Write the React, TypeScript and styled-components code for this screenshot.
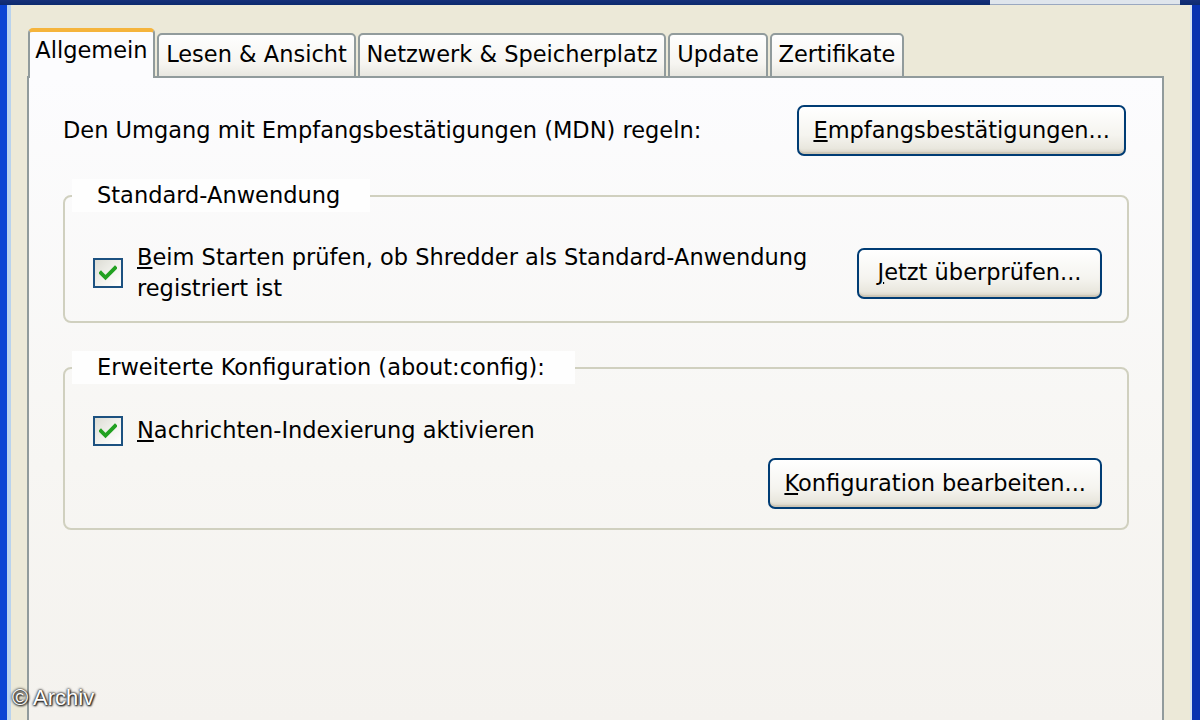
import React from "react";
import styled, { createGlobalStyle } from "styled-components";

const GlobalStyle = createGlobalStyle`
  html, body {
    margin: 0;
    padding: 0;
    width: 1200px;
    height: 720px;
    overflow: hidden;
    background: #ece9d8;
  }
  * { box-sizing: border-box; }
`;

const Window = styled.div`
  position: relative;
  width: 1200px;
  height: 720px;
  display: flex;
  flex-direction: column;
  font-family: "DejaVu Sans", "Liberation Sans", sans-serif;
  font-size: 22.5px;
  color: #000;
  overflow: hidden;
`;

const TitleEdge = styled.div`
  height: 5px;
  flex-shrink: 0;
  display: flex;
  background: linear-gradient(#16307a, #0c2a6e);
`;

const TitleSpacer = styled.div`
  flex: 1;
`;

const TitleButtonEdge = styled.div`
  width: 190px;
  margin-right: 20px;
  background: #dfe5ec;
  border-bottom: 1px solid #9aa8c0;
`;

const Frame = styled.div`
  flex: 1;
  display: flex;
`;

const FrameSide = styled.div<{ $side: "left" | "right" }>`
  flex-shrink: 0;
  width: ${(p) => (p.$side === "left" ? "11px" : "10px")};
  background: #0a44d4;
  ${(p) =>
    p.$side === "left"
      ? "border-right: 4px solid #b9d3ee;"
      : "border-left: 2px solid #d6e2ee; background: #0832b0;"}
`;

const Client = styled.div`
  flex: 1;
  display: flex;
  flex-direction: column;
  padding: 23px 26px 0 16px;
  background: #ece9d8;
`;

const TabStrip = styled.div`
  display: flex;
  align-items: flex-end;
  padding-left: 1px;
  position: relative;
  z-index: 1;
  margin-bottom: -2px;
`;

const Tab = styled.div<{ $active?: boolean; $width: number }>`
  width: ${(p) => p.$width}px;
  height: ${(p) => (p.$active ? "50px" : "45px")};
  margin-right: 2px;
  display: flex;
  align-items: center;
  justify-content: center;
  white-space: nowrap;
  border: 2px solid #919b9c;
  border-bottom: ${(p) => (p.$active ? "none" : "2px solid #919b9c")};
  border-top: ${(p) => (p.$active ? "4px solid #f5b43c" : "2px solid #919b9c")};
  border-radius: 5px 5px 0 0;
  padding-bottom: ${(p) => (p.$active ? "10px" : "4px")};
  background: ${(p) =>
    p.$active
      ? "#fcfcfe"
      : "linear-gradient(#fefefe, #f6f5f1 70%, #e8e7e0)"};
`;

const Panel = styled.div`
  flex: 1;
  border: 2px solid #919b9c;
  border-bottom: none;
  background: linear-gradient(#fcfcfe, #f7f6f3 60%, #f4f2ee);
  padding: 27px 33px 0 34px;
  display: flex;
  flex-direction: column;
`;

const Row = styled.div`
  display: flex;
  align-items: center;
  justify-content: space-between;
  padding-right: 3px;
  margin-bottom: 23px;
`;

const Label = styled.span`
  line-height: 31px;
  white-space: nowrap;
`;

const XpButton = styled.button`
  height: 51px;
  min-width: 245px;
  padding: 0 14px 2px 14px;
  font-family: inherit;
  font-size: inherit;
  color: #000;
  white-space: nowrap;
  border: 2px solid #003c74;
  border-radius: 7px;
  background: linear-gradient(#ffffff, #f5f4ef 60%, #e9e7de 88%, #d7d2c4);
  box-shadow: inset 0 -2px 1px rgba(180, 170, 150, 0.35);
  cursor: default;
`;

const GroupBox = styled.fieldset`
  margin: 0 0 28px 0;
  padding: 0 25px 0 28px;
  border: 2px solid #d0d0bf;
  border-radius: 8px;
  min-width: 0;
`;

const Legend = styled.legend`
  margin-left: -21px;
  padding: 0 30px 0 25px;
  height: 33px;
  line-height: 33px;
  background: #fefefe;
`;

const GroupRow = styled.div<{ $top: number; $bottom: number }>`
  display: flex;
  align-items: center;
  padding-top: ${(p) => p.$top}px;
  padding-bottom: ${(p) => p.$bottom}px;
`;

const RightAligned = styled.div<{ $bottom: number }>`
  display: flex;
  justify-content: flex-end;
  padding-top: 12px;
  padding-bottom: ${(p) => p.$bottom}px;
`;

const CheckLabel = styled.label`
  flex: 1;
  display: flex;
  align-items: center;
  gap: 14px;
`;

const CheckBox = styled.span`
  width: 30px;
  height: 30px;
  flex-shrink: 0;
  border: 2px solid #1c5180;
  background: linear-gradient(135deg, #dcdcd4, #f4f4f0 60%, #ffffff);
  display: flex;
  align-items: center;
  justify-content: center;
`;

const Watermark = styled.div`
  position: absolute;
  left: 12px;
  bottom: 9px;
  font-family: "Liberation Sans", Arial, sans-serif;
  font-size: 22px;
  color: #fff;
  text-shadow: 0 0 3px #222, 0 0 2px #222, 1px 1px 2px #000;
`;

const Check = () => (
  <CheckBox>
    <svg width="18" height="16" viewBox="0 0 18 16">
      <path
        d="M2 8 L6.5 12.5 L16 3"
        fill="none"
        stroke="#21a121"
        strokeWidth="3.8"
        strokeLinecap="square"
      />
    </svg>
  </CheckBox>
);

const tabs = [
  { label: "Allgemein", width: 127, active: true },
  { label: "Lesen & Ansicht", width: 199 },
  { label: "Netzwerk & Speicherplatz", width: 308 },
  { label: "Update", width: 100 },
  { label: "Zertifikate", width: 134 },
];

export default function App() {
  return (
    <>
      <GlobalStyle />
      <Window>
        <TitleEdge>
          <TitleSpacer />
          <TitleButtonEdge />
        </TitleEdge>
        <Frame>
          <FrameSide $side="left" />
          <Client>
            <TabStrip>
              {tabs.map((t) => (
                <Tab key={t.label} $active={t.active} $width={t.width}>
                  {t.label}
                </Tab>
              ))}
            </TabStrip>
            <Panel>
              <Row>
                <Label>Den Umgang mit Empfangsbestätigungen (MDN) regeln:</Label>
                <XpButton>
                  <u>E</u>mpfangsbestätigungen...
                </XpButton>
              </Row>

              <GroupBox>
                <Legend>Standard-Anwendung</Legend>
                <GroupRow $top={30} $bottom={17}>
                  <CheckLabel>
                    <Check />
                    <Label>
                      <u>B</u>eim Starten prüfen, ob Shredder als Standard-Anwendung
                      <br />
                      registriert ist
                    </Label>
                  </CheckLabel>
                  <XpButton>
                    <u>J</u>etzt überprüfen...
                  </XpButton>
                </GroupRow>
              </GroupBox>

              <GroupBox>
                <Legend>Erweiterte Konfiguration (about:config):</Legend>
                <GroupRow $top={31} $bottom={0}>
                  <CheckLabel>
                    <Check />
                    <Label>
                      <u>N</u>achrichten-Indexierung aktivieren
                    </Label>
                  </CheckLabel>
                </GroupRow>
                <RightAligned $bottom={19}>
                  <XpButton>
                    <u>K</u>onfiguration bearbeiten...
                  </XpButton>
                </RightAligned>
              </GroupBox>
            </Panel>
          </Client>
          <FrameSide $side="right" />
        </Frame>
        <Watermark>© Archiv</Watermark>
      </Window>
    </>
  );
}
